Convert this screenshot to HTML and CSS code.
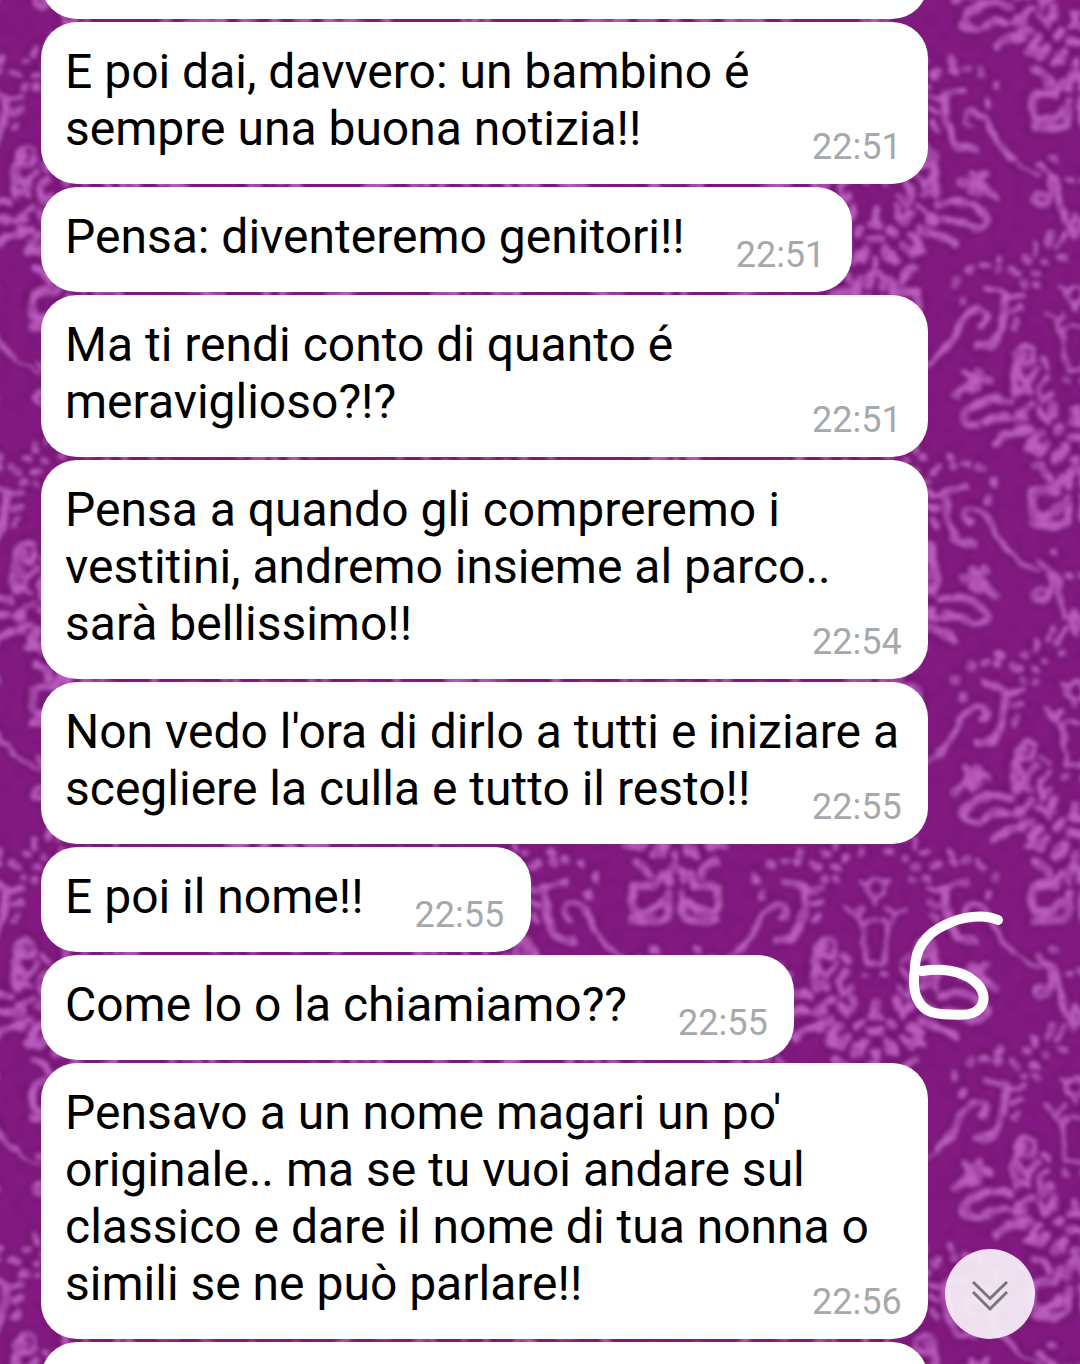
FILE: index.html
```html
<!DOCTYPE html>
<html lang="it">
<head>
<meta charset="utf-8">
<meta name="viewport" content="width=device-width, initial-scale=1">
<title>Chat</title>
<link rel="stylesheet" href="styles.css">
</head>
<body>
<main class="chat">
  <svg class="wallpaper" aria-hidden="true">
    <defs>
      <!-- right half of one damask motif; mirrored and half-dropped below -->
      <g id="half" fill="none" stroke-linecap="round" stroke-linejoin="round">
        <path stroke-width="5" d="M0 35a8 8 0 0 1 8 8a8 8 0 0 1-8 9M8 40l6-4M0 55v3M30 63l-8 5-7 12-3 4-3 34H0M12 63l6 6M0 75h2M8 76l3 2"/>
        <path stroke-width="7" d="M12 6h2M30 12h1M48 8h2M38 22h3M38 34h1M50 33h2M57 22h2M75 6l2 3M63 18h1M77 17l2 1M89 15h3M104 17l2 3M120 30v4M112 48l1 4M9 130h1M177 104h3M193 127h2"/>
        <path stroke-width="6" d="M53 43Q62 48 70 43T90 37M57 70l4 6M54 56l8 4"/>
        <path stroke-width="8" d="M70 43Q69 62 74 76T82 92T98 95"/>
        <path stroke-width="6" d="M95 73Q87 70 90 62T106 62Q114 68 118 80T138 106"/>
        <path stroke-width="3" d="M138 106Q150 118 165 122"/>
        <path stroke-width="6" d="M163 112L180 124Q184 134 184 146L190 168M175 126Q178 140 172 149Q162 154 159 146Q162 137 169 143"/>
        <path stroke-width="8" d="M160 17Q170 18 174 30M158 42Q155 60 160 66Q174 70 186 57M159 42Q170 37 180 42M158 75H180Q192 76 193 65V48M183 3l-4 7M155 0h10M200 20q-8 4-7 16M186 28l-6 12"/>
        <path stroke-width="8" d="M86 130Q95 125 106 132L120 145M96 120l8 8M104 140l-8-4M104 128l6-8"/>
        <path stroke-width="8" d="M65 151Q78 146 90 149T110 162T97 175M69 166Q80 164 90 171M56 162v5M53 103Q66 120 59 142M53 181Q68 180 80 192"/>
        <path stroke-width="6" d="M160 192v8M177 179l-5 12M190 180l-8 13M200 162l-5 10 5 12"/>
        <path stroke-width="6" d="M42 97q8-7 15 2t-5 12t-11-7M50 103h1M38 118l6 6M32 110l-5 6M58 117l-5 12M47 127l2 8M28 126l8 9-2 13M46 142l12-5M24 142l9 9M42 153l9 6"/>
        <path stroke-width="8" d="M0 158v6M22 153l1 10M35 160l-7 10M52 166l8 2M0 186h6M14 176l4 5M36 181l8 9M48 198l-8-4M28 192l8 9M10 196l4 10M0 207v2M45 176l10 2M0 171h4"/>
      </g>
      <g id="motif">
        <use href="#half"/>
        <use href="#half" transform="scale(-1 1)"/>
      </g>
      <g id="repeat">
        <use href="#motif" x="200" y="-198"/>
        <use href="#motif"/>
        <use href="#motif" x="400"/>
        <use href="#motif" x="200" y="198"/>
        <use href="#motif" y="396"/>
        <use href="#motif" x="400" y="396"/>
        <use href="#motif" y="-396"/>
        <use href="#motif" x="400" y="-396"/>
      </g>
      <pattern id="damask" x="75" y="53" width="400" height="396" patternUnits="userSpaceOnUse">
        <g class="shade"><use href="#repeat" y="5"/><use href="#repeat" y="-5"/><use href="#repeat" x="5"/><use href="#repeat" x="-5"/></g>
        <g class="glow"><use href="#repeat" x="1" y="1"/></g>
        <use class="bloom" href="#repeat"/>
      </pattern>
      <filter id="weave" x="0" y="0" width="100%" height="100%" color-interpolation-filters="sRGB">
        <feTurbulence type="fractalNoise" baseFrequency="0.08" numOctaves="1" seed="4" result="n"/>
        <feDisplacementMap in="SourceGraphic" in2="n" scale="9" xChannelSelector="R" yChannelSelector="G"/>
        <feGaussianBlur stdDeviation="2"/>
      </filter>
      <filter id="mottle" x="0" y="0" width="100%" height="100%" color-interpolation-filters="sRGB">
        <feTurbulence type="fractalNoise" baseFrequency="0.08" numOctaves="1" seed="9"/>
        <feColorMatrix values="0 0 0 0 0.45  0 0 0 0 0.08  0 0 0 0 0.45  4 0 0 0 -1.7"/>
        <feGaussianBlur stdDeviation="1"/>
      </filter>
    </defs>
    <g filter="url(#weave)">
      <rect class="cloth" x="-20" y="-20" width="110%" height="110%"/>
      <rect x="-20" y="-20" width="110%" height="110%" fill="url(#damask)"/>
    </g>
    <rect class="mottle" width="100%" height="100%" filter="url(#mottle)"/>
  </svg>

  <ol class="messages">
    <li class="bubble"></li>
    <li class="bubble">E poi dai, davvero: un bambino é sempre una buona notizia!!<time class="time">22:51</time></li>
    <li class="bubble">Pensa: diventeremo genitori!!<time class="time">22:51</time></li>
    <li class="bubble">Ma ti rendi conto di quanto é meraviglioso?!?<time class="time">22:51</time></li>
    <li class="bubble">Pensa a quando gli compreremo i vestitini, andremo insieme al parco.. sarà bellissimo!!<time class="time">22:54</time></li>
    <li class="bubble">Non vedo l'ora di dirlo a tutti e iniziare a scegliere la culla e tutto il resto!!<time class="time">22:55</time></li>
    <li class="bubble">E poi il nome!!<time class="time">22:55</time></li>
    <li class="bubble">Come lo o la chiamiamo??<time class="time">22:55</time></li>
    <li class="bubble">Pensavo a un nome magari un po' originale.. ma se tu vuoi andare sul classico e dare il nome di tua nonna o simili se ne può parlare!!<time class="time">22:56</time></li>
    <li class="bubble"></li>
  </ol>

  <svg class="scribble" viewBox="0 0 140 140" role="img" aria-label="6">
    <path d="M108 30C94 24 72 26 55 35C35 44 25 60 25 78C23 92 24 103 28 110C34 122 44 124 60 124.500C76 125 84 125 90 118C97 109 93 98 84 91C71 80 50 78 32 81"/>
  </svg>

  <button class="to-bottom" type="button" aria-label="Vai in fondo">
    <svg viewBox="0 0 90 90" aria-hidden="true">
      <path d="M28 33L45 49.500L62 33M28 43L45 60L62 43"/>
    </svg>
  </button>
</main>
</body>
</html>
```
FILE: styles.css
```css
* {
  box-sizing: border-box;
}

body {
  margin: 0;
  font-family: Roboto, "Liberation Sans", sans-serif;
  color: #000;
}

.chat {
  position: relative;
  height: 100vh;
  overflow: hidden;
  background: #80187f;
}

.wallpaper {
  position: absolute;
  inset: 0;
  width: 100%;
  height: 100%;
}

.cloth {
  fill: #831a82;
}

.shade {
  stroke: #6a1266;
  opacity: 0.6;
}

.glow {
  stroke: #a045a4;
}

.bloom {
  stroke: #b95cbe;
}

.mottle {
  opacity: 0.3;
}

.messages {
  position: relative;
  display: flex;
  flex-direction: column;
  align-items: flex-start;
  gap: 3px;
  margin: -86px 0 0;
  padding: 0 152px 0 41px;
  list-style: none;
}

.bubble {
  min-height: 105px;
  padding: 21px 25px 27px 24px;
  border-radius: 36px;
  background: #fff;
  font-size: 48px;
  line-height: 57px;
}

.bubble:empty {
  width: 100%;
}

/* floated to the end of the last line; the digits hang below its box */
.time {
  float: right;
  width: 91px;
  height: 31px;
  margin: 26px 0 0 51px;
  font-size: 36px;
  line-height: 42px;
  color: #a5a9ac;
}

.scribble {
  position: absolute;
  top: 890px;
  right: 50px;
  width: 140px;
  height: 140px;
  fill: none;
  stroke: #fff;
  stroke-width: 10;
  stroke-linecap: round;
  stroke-linejoin: round;
}

.to-bottom {
  position: absolute;
  right: 45px;
  bottom: 25px;
  width: 90px;
  height: 90px;
  padding: 0;
  border: 0;
  border-radius: 50%;
  background: rgba(248, 242, 249, 0.92);
}

.to-bottom svg {
  display: block;
  fill: none;
  stroke: #777;
  stroke-width: 3;
}
```
